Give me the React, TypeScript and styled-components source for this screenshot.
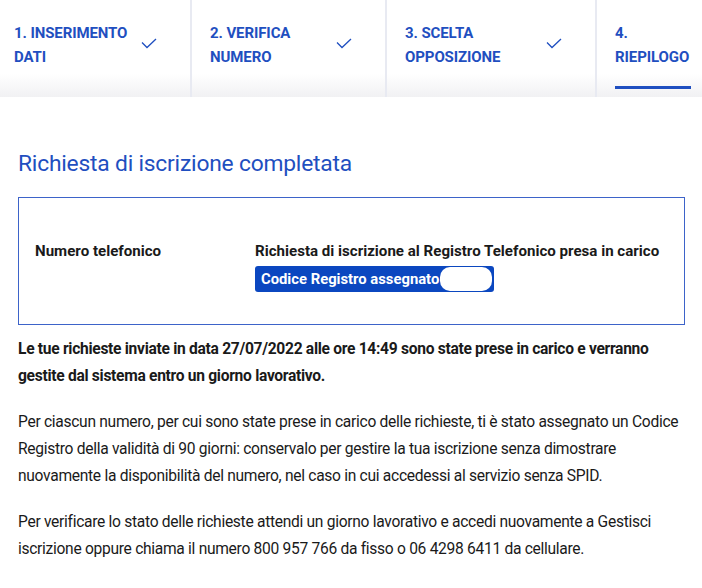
import styled, { createGlobalStyle } from "styled-components";

const GlobalStyle = createGlobalStyle`
  html, body {
    margin: 0;
    padding: 0;
    background: #ffffff;
  }
  body {
    font-family: Roboto, "Liberation Sans", sans-serif;
    color: #1a1a1a;
    -webkit-font-smoothing: antialiased;
  }
`;

interface Step {
  id: number;
  label: string;
  width: number;
  done: boolean;
}

const steps: Step[] = [
  { id: 1, label: "1. Inserimento dati", width: 192, done: true },
  { id: 2, label: "2. Verifica numero", width: 195, done: true },
  { id: 3, label: "3. Scelta opposizione", width: 210, done: true },
  { id: 4, label: "4. Riepilogo", width: 105, done: false }
];

const CheckIcon = () => (
  <svg width="16" height="11" viewBox="0 0 16 11" fill="none">
    <path d="M1 4.5 L6 9.5 L15 1" stroke="#1f4fc0" strokeWidth="1.3" />
  </svg>
);

const App = () => {
  return (
    <>
      <GlobalStyle />
      <Stepper>
        {steps.map((step, i) => (
          <StepTab key={step.id} $width={step.width} $first={i === 0} $last={i === steps.length - 1}>
            <StepLabel $narrow={step.id === 4}>{step.label}</StepLabel>
            {step.done && <CheckIcon />}
            {!step.done && <ActiveBar />}
          </StepTab>
        ))}
      </Stepper>
      <Content>
        <Title>Richiesta di iscrizione completata</Title>
        <SummaryBox>
          <SummaryLabel>Numero telefonico</SummaryLabel>
          <SummaryValue>
            <ValueText>Richiesta di iscrizione al Registro Telefonico presa in carico</ValueText>
            <CodeBadge>
              Codice Registro assegnato
              <Redacted />
            </CodeBadge>
          </SummaryValue>
        </SummaryBox>
        <Paragraph $bold>
          Le tue richieste inviate in data 27/07/2022 alle ore 14:49 sono state prese in carico e verranno
          gestite dal sistema entro un giorno lavorativo.
        </Paragraph>
        <Paragraph>
          Per ciascun numero, per cui sono state prese in carico delle richieste, ti è stato assegnato un Codice
          Registro della validità di 90 giorni: conservalo per gestire la tua iscrizione senza dimostrare
          nuovamente la disponibilità del numero, nel caso in cui accedessi al servizio senza SPID.
        </Paragraph>
        <Paragraph>
          Per verificare lo stato delle richieste attendi un giorno lavorativo e accedi nuovamente a Gestisci
          iscrizione oppure chiama il numero 800 957 766 da fisso o 06 4298 6411 da cellulare.
        </Paragraph>
      </Content>
    </>
  );
};

export default App;

const Stepper = styled.div`
  display: flex;
  height: 97px;
  background: linear-gradient(to bottom, #ffffff 0%, #ffffff 76%, #f1f1f3 100%);
  overflow: hidden;
`;

const StepTab = styled.div<{ $width: number; $first: boolean; $last: boolean }>`
  position: relative;
  flex: 0 0 ${(p) => p.$width}px;
  box-sizing: border-box;
  display: flex;
  align-items: flex-start;
  justify-content: space-between;
  padding: 21px 33px 0 ${(p) => (p.$first ? 14 : 18)}px;
  border-right: ${(p) => (p.$last ? "none" : "2px solid #e8eaf2")};

  svg {
    margin-top: 17px;
    flex: 0 0 auto;
  }
`;

const StepLabel = styled.div<{ $narrow?: boolean }>`
  width: ${(p) => (p.$narrow ? "80px" : "120px")};
  font-size: 15px;
  font-weight: 700;
  line-height: 24px;
  text-transform: uppercase;
  color: #1f4fc0;
  letter-spacing: -0.1px;
`;

const ActiveBar = styled.div`
  position: absolute;
  left: 18px;
  bottom: 8px;
  width: 76px;
  height: 3px;
  background: #1f4fc0;
`;

const Content = styled.div`
  padding: 52px 17px 0 18px;
`;

const Title = styled.h1`
  margin: 0 0 18px 0;
  font-size: 22.8px;
  font-weight: 400;
  line-height: 30px;
  color: #1f4fc0;
  letter-spacing: -0.2px;
`;

const SummaryBox = styled.div`
  display: grid;
  grid-template-columns: 220px 1fr;
  align-items: start;
  height: 128px;
  box-sizing: border-box;
  padding: 42px 16px 0 16px;
  border: 1px solid #3d63c9;
  margin-bottom: 11px;
`;

const SummaryLabel = styled.div`
  font-size: 15.1px;
  font-weight: 700;
  line-height: 22px;
  color: #1a1a1a;
`;

const SummaryValue = styled.div`
  display: flex;
  flex-direction: column;
  align-items: flex-start;
  gap: 4px;
`;

const ValueText = styled.div`
  font-size: 15.1px;
  font-weight: 700;
  line-height: 22px;
  color: #1a1a1a;
`;

const CodeBadge = styled.div`
  display: flex;
  align-items: center;
  height: 26px;
  padding: 0 2px 0 6px;
  border-radius: 3px;
  background: #0b47c0;
  color: #ffffff;
  font-size: 14.8px;
  font-weight: 700;
`;

const Redacted = styled.span`
  display: inline-block;
  width: 52px;
  height: 24px;
  margin-left: 1px;
  border-radius: 10px;
  background: #ffffff;
`;

const Paragraph = styled.p<{ $bold?: boolean }>`
  margin: 0 0 19px 0;
  font-size: 15.6px;
  line-height: 27px;
  font-weight: ${(p) => (p.$bold ? 700 : 400)};
  color: #1a1a1a;
  letter-spacing: -0.3px;
`;
